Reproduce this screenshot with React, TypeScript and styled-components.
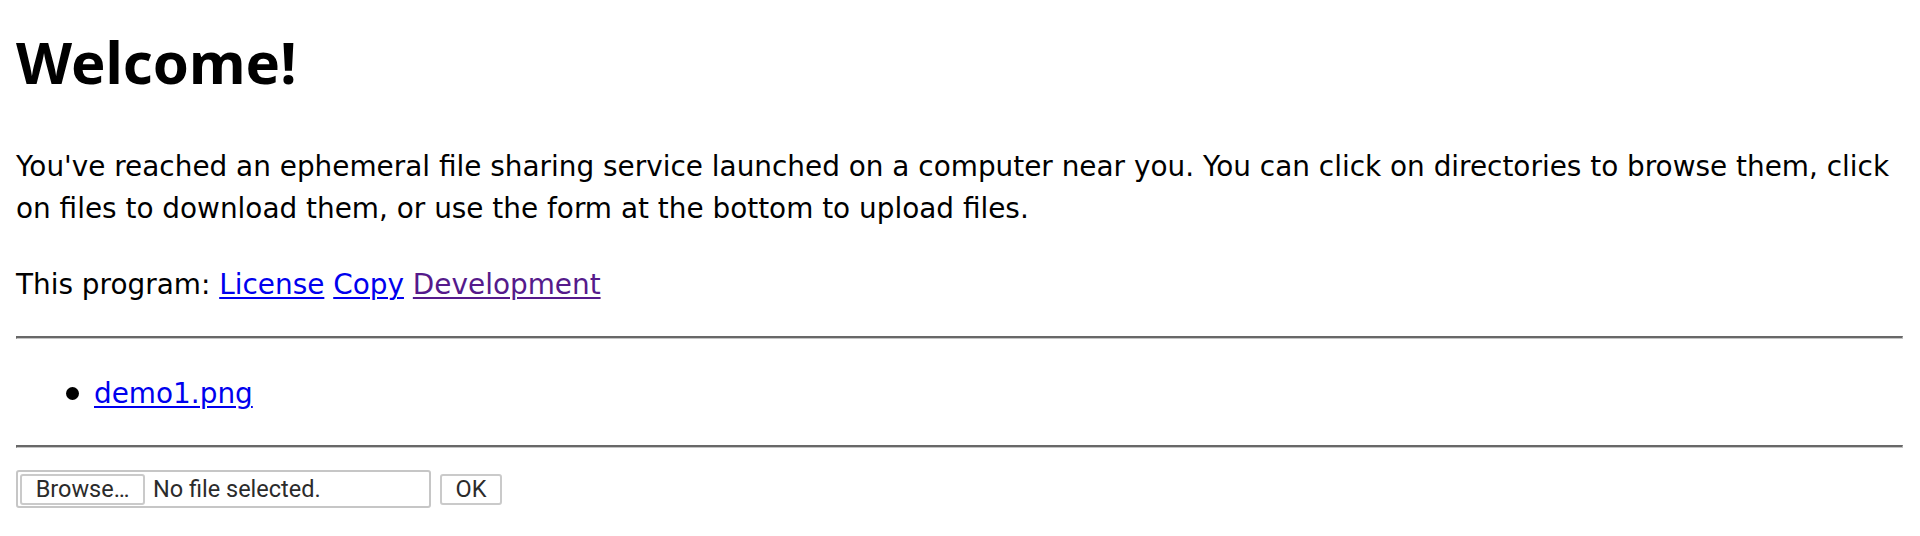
import React from "react";
import styled, { createGlobalStyle } from "styled-components";

const GlobalStyle = createGlobalStyle`
  html, body {
    margin: 0;
    padding: 0;
    background: #ffffff;
  }
  body {
    font-family: "DejaVu Sans", "Liberation Sans", sans-serif;
    font-size: 27.9px;
    color: #000000;
  }
`;

const Page = styled.main`
  padding: 30px 17px 24px 16px;
`;

const Heading = styled.h1`
  margin: 0;
  font-family: "Noto Sans", "DejaVu Sans", sans-serif;
  font-weight: 700;
  font-size: 58px;
  line-height: 64px;
`;

const Paragraph = styled.p<{ $top: number }>`
  margin: ${(p) => p.$top}px 0 0 0;
  line-height: 42px;
`;

const Link = styled.a<{ $visited?: boolean }>`
  color: ${(p) => (p.$visited ? "#551a8b" : "#0000ee")};
  text-decoration: underline;
  text-decoration-thickness: 2px;
  text-underline-offset: 3px;
`;

const Rule = styled.hr<{ $top: number }>`
  margin: ${(p) => p.$top}px 0 0 0;
  height: 0;
  border-style: solid;
  border-width: 2px 1px 1px 1px;
  border-color: #686868 #c4c4c4 #c4c4c4 #686868;
`;

const FileList = styled.ul`
  margin: 33px 0 0 0;
  padding: 0 0 0 78px;
  list-style: none;
`;

const FileItem = styled.li`
  position: relative;
  line-height: 43px;

  &::before {
    content: "";
    position: absolute;
    left: -28px;
    top: 15px;
    width: 13px;
    height: 13px;
    border-radius: 50%;
    background: #000000;
  }
`;

const UploadForm = styled.form`
  display: flex;
  align-items: center;
  gap: 9px;
  margin-top: 22px;
  font-family: Roboto, "Liberation Sans", sans-serif;
  font-size: 23.5px;
  color: #2b2b2b;
`;

const FileBox = styled.label`
  display: flex;
  align-items: center;
  box-sizing: border-box;
  width: 415px;
  height: 38px;
  padding: 0 2px;
  border: 2px solid #c6c6c6;
  border-radius: 3px;
  background: #ffffff;
`;

const FormButton = styled.button<{ $width: number }>`
  box-sizing: border-box;
  width: ${(p) => p.$width}px;
  height: 31px;
  padding: 0;
  border: 2px solid #cacaca;
  border-radius: 3px;
  background: #ffffff;
  font-family: Roboto, "Liberation Sans", sans-serif;
  font-size: 23.5px;
  line-height: 27px;
  color: #2b2b2b;
  text-align: center;
`;

const FileStatus = styled.span`
  margin-left: 8px;
  white-space: nowrap;
`;

export default function App() {
  return (
    <>
      <GlobalStyle />
      <Page>
        <Heading>Welcome!</Heading>
        <Paragraph $top={52}>
          You've reached an ephemeral file sharing service launched on a computer near you. You can
          click on directories to browse them, click on files to download them, or use the form at the
          bottom to upload files.
        </Paragraph>
        <Paragraph $top={34}>
          This program: <Link href="#license">License</Link> <Link href="#copy">Copy</Link>{" "}
          <Link href="#development" $visited>
            Development
          </Link>
        </Paragraph>
        <Rule $top={30} />
        <FileList>
          <FileItem>
            <Link href="#demo1">demo1.png</Link>
          </FileItem>
        </FileList>
        <Rule $top={30} />
        <UploadForm onSubmit={(e) => e.preventDefault()}>
          <FileBox>
            <FormButton type="button" $width={125}>
              Browse…
            </FormButton>
            <FileStatus>No file selected.</FileStatus>
          </FileBox>
          <FormButton type="submit" $width={62}>
            OK
          </FormButton>
        </UploadForm>
      </Page>
    </>
  );
}
